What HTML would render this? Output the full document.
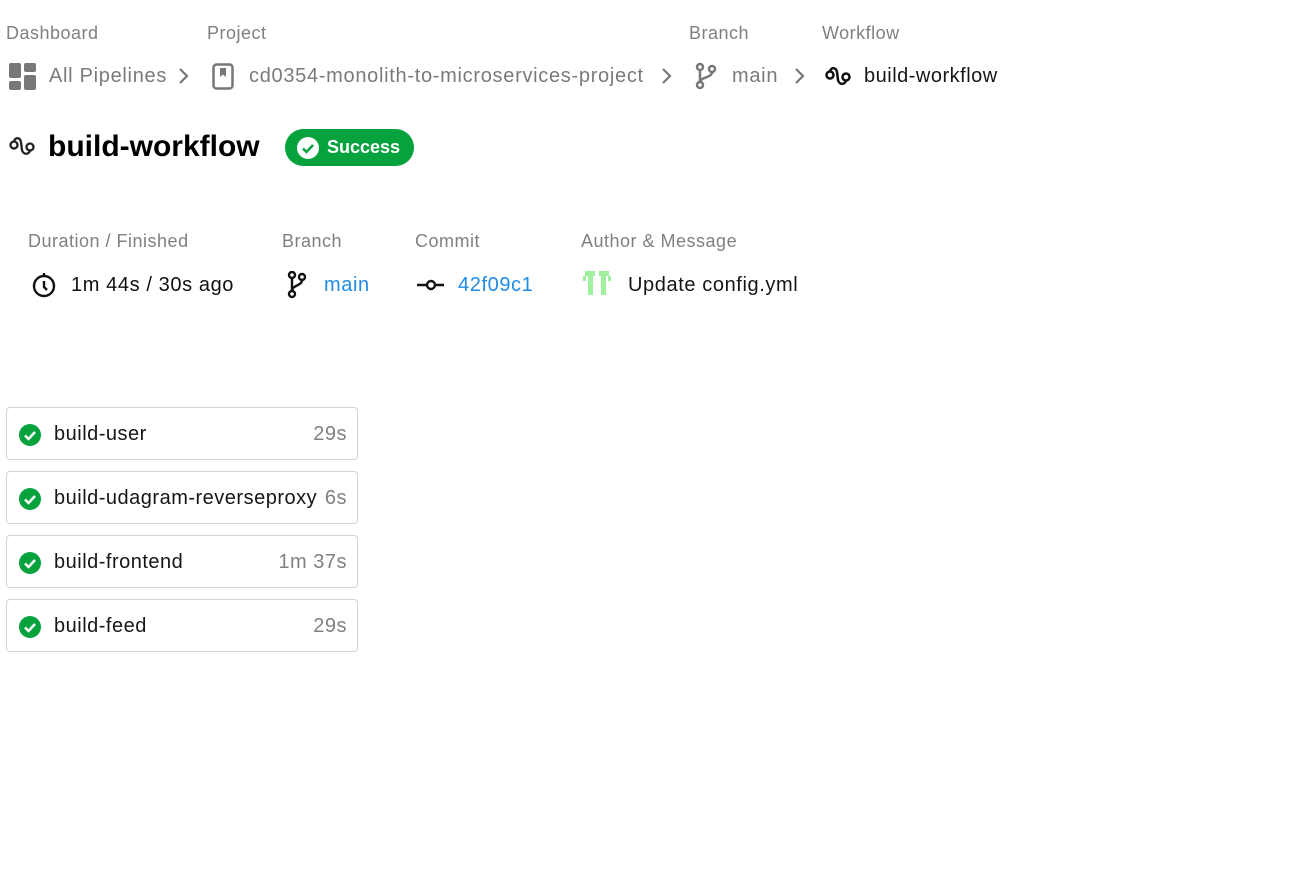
<!DOCTYPE html>
<html><head><meta charset="utf-8"><style>
body{margin:0;width:1306px;height:872px;background:#fff;font-family:"Liberation Sans",sans-serif;position:relative;overflow:hidden}
.a{position:absolute;white-space:nowrap}
.lbl{color:#808080;font-size:18px;letter-spacing:.5px}
.bc{color:#7a7a7a;font-size:20px;letter-spacing:.7px}
.v{font-size:20px;letter-spacing:.6px}
.job{position:absolute;left:6px;width:352px;height:53px;border:1px solid #d4d4d4;border-radius:4px;box-sizing:border-box}
.job .n{position:absolute;left:47px;top:15px;font-size:20px;letter-spacing:.5px;color:#161616}
.job .t{position:absolute;right:10px;top:15px;font-size:20px;letter-spacing:.5px;color:#808080}
.job svg{position:absolute;left:11px;top:15px}
</style></head><body>
<div class="a lbl" style="left:6px;top:23px">Dashboard</div>
<div class="a lbl" style="left:207px;top:23px">Project</div>
<div class="a lbl" style="left:689px;top:23px">Branch</div>
<div class="a lbl" style="left:822px;top:23px">Workflow</div>

<svg class="a" style="left:9px;top:63px" width="27" height="27" viewBox="0 0 27 27" fill="#777"><rect x="0" y="0" width="12" height="15" rx="2"/><rect x="15" y="0" width="12" height="9" rx="2"/><rect x="0" y="18" width="12" height="9" rx="2"/><rect x="15" y="12" width="12" height="15" rx="2"/></svg>
<div class="a bc" style="left:49px;top:65px">All Pipelines</div>
<svg class="a" style="left:178px;top:67px" width="12" height="18" viewBox="0 0 12 18"><path d="M2 2l7 7-7 7" fill="none" stroke="#777" stroke-width="2.2"/></svg>
<svg class="a" style="left:212px;top:63px" width="22" height="27" viewBox="0 0 22 27"><rect x="1.5" y="1.5" width="19" height="24" rx="3" fill="none" stroke="#777" stroke-width="2.5"/><path d="M8 5h6v9l-3-2.5-3 2.5z" fill="#777"/></svg>
<div class="a bc" style="left:249px;top:65px">cd0354-monolith-to-microservices-project</div>
<svg class="a" style="left:661px;top:67px" width="12" height="18" viewBox="0 0 12 18"><path d="M2 2l7 7-7 7" fill="none" stroke="#777" stroke-width="2.2"/></svg>
<svg class="a" style="left:695px;top:62px" width="22" height="28" viewBox="0 0 22 28" fill="none" stroke="#777" stroke-width="2.5"><circle cx="5" cy="5" r="3"/><circle cx="5" cy="23" r="3"/><circle cx="17" cy="7" r="3"/><path d="M5 8v12M17 10c0 6-12 5-12 10"/></svg>
<div class="a bc" style="left:732px;top:65px">main</div>
<svg class="a" style="left:794px;top:67px" width="12" height="18" viewBox="0 0 12 18"><path d="M2 2l7 7-7 7" fill="none" stroke="#777" stroke-width="2.2"/></svg>
<svg class="a" style="left:825px;top:66px" width="27" height="20" viewBox="0 0 27 20" fill="none" stroke="#111" stroke-width="2.5"><circle cx="5" cy="9" r="3.5"/><circle cx="21" cy="11" r="3.5"/><path d="M5 5.5C6 1 11 1 12 6l1 8c1 5 7 5 8 0.5"/></svg>
<div class="a" style="left:864px;top:65px;font-size:20px;letter-spacing:.5px;color:#161616">build-workflow</div>

<svg class="a" style="left:9px;top:136px" width="27" height="20" viewBox="0 0 27 20" fill="none" stroke="#222" stroke-width="2.3"><circle cx="5" cy="9" r="3.5"/><circle cx="21" cy="11" r="3.5"/><path d="M5 5.5C6 1 11 1 12 6l1 8c1 5 7 5 8 0.5"/></svg>
<div class="a" style="left:48px;top:130px;font-size:30px;font-weight:bold;color:#000">build-workflow</div>
<div class="a" style="left:285px;top:129px;width:129px;height:37px;border-radius:19px;background:#05a23e"></div>
<svg class="a" style="left:296px;top:136px" width="24" height="24" viewBox="0 0 24 24"><circle cx="12" cy="12" r="11" fill="#fff"/><path d="M7 12.5l3.5 3.5 6.5-7" fill="none" stroke="#05a23e" stroke-width="2.5"/></svg>
<div class="a" style="left:327px;top:137px;font-size:18px;font-weight:bold;color:#fff">Success</div>

<div class="a lbl" style="left:28px;top:231px">Duration / Finished</div>
<div class="a lbl" style="left:282px;top:231px">Branch</div>
<div class="a lbl" style="left:415px;top:231px">Commit</div>
<div class="a lbl" style="left:581px;top:231px">Author &amp; Message</div>

<svg class="a" style="left:31px;top:270px" width="26" height="29" viewBox="0 0 26 29" fill="none" stroke="#111" stroke-width="2.4"><circle cx="13" cy="16" r="10"/><path d="M13 3v3M13 11v6l3 3"/></svg>
<div class="a v" style="left:71px;top:274px;color:#111">1m 44s / 30s ago</div>
<svg class="a" style="left:287px;top:271px" width="20" height="28" viewBox="0 0 20 28" fill="none" stroke="#111" stroke-width="2.4"><circle cx="5" cy="4" r="3"/><circle cx="5" cy="23" r="3"/><circle cx="15" cy="6" r="3"/><path d="M5 7v13M15 9c0 6-10 5-10 11"/></svg>
<div class="a v" style="left:324px;top:274px;color:#1f8ce6">main</div>
<svg class="a" style="left:417px;top:278px" width="28" height="14" viewBox="0 0 28 14" fill="none" stroke="#111" stroke-width="2.4"><circle cx="14" cy="7" r="4"/><path d="M0 7h10M18 7h9"/></svg>
<div class="a v" style="left:458px;top:274px;color:#1f8ce6">42f09c1</div>
<svg class="a" style="left:583px;top:271px" width="28" height="24" viewBox="0 0 28 24" fill="#9ff09f"><rect x="2" y="0" width="10" height="5"/><rect x="16" y="0" width="10" height="5"/><rect x="5" y="5" width="5" height="19"/><rect x="18" y="5" width="5" height="19"/><rect x="0" y="5" width="3" height="5"/><rect x="25" y="5" width="3" height="5"/></svg>
<div class="a v" style="left:628px;top:274px;color:#161616">Update config.yml</div>

<div class="job" style="top:407px"><svg width="24" height="24" viewBox="0 0 24 24"><circle cx="12" cy="12" r="11" fill="#05a23e"/><path d="M7 12.5l3.5 3.5 6.5-7" fill="none" stroke="#fff" stroke-width="2.5"/></svg><span class="n">build-user</span><span class="t">29s</span></div>
<div class="job" style="top:471px"><svg width="24" height="24" viewBox="0 0 24 24"><circle cx="12" cy="12" r="11" fill="#05a23e"/><path d="M7 12.5l3.5 3.5 6.5-7" fill="none" stroke="#fff" stroke-width="2.5"/></svg><span class="n">build-udagram-reverseproxy</span><span class="t">6s</span></div>
<div class="job" style="top:535px"><svg width="24" height="24" viewBox="0 0 24 24"><circle cx="12" cy="12" r="11" fill="#05a23e"/><path d="M7 12.5l3.5 3.5 6.5-7" fill="none" stroke="#fff" stroke-width="2.5"/></svg><span class="n">build-frontend</span><span class="t">1m 37s</span></div>
<div class="job" style="top:599px"><svg width="24" height="24" viewBox="0 0 24 24"><circle cx="12" cy="12" r="11" fill="#05a23e"/><path d="M7 12.5l3.5 3.5 6.5-7" fill="none" stroke="#fff" stroke-width="2.5"/></svg><span class="n">build-feed</span><span class="t">29s</span></div>
</body></html>
